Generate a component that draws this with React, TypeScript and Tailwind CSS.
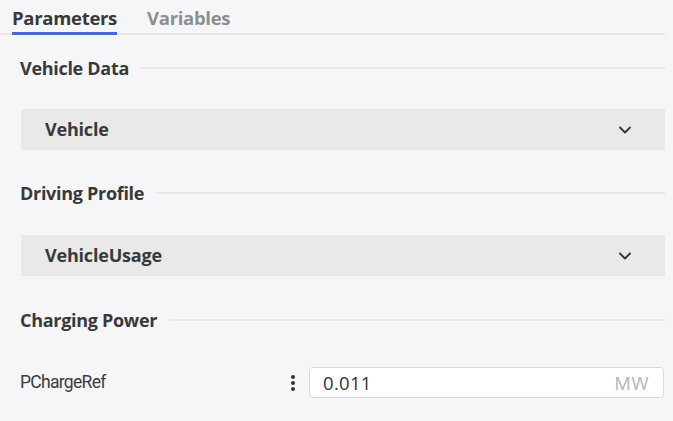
import { ChevronDown } from 'lucide-react';

const font = { fontFamily: '"Open Sans", "Noto Sans", sans-serif' };

const SectionTitle: React.FC<{ title: string }> = ({ title }) => (
	<div className="flex items-center gap-3 h-[40px]">
		<h4 className="font-bold text-[18px] text-[#38393b] tracking-[-0.3px] whitespace-nowrap">{title}</h4>
		<div className="flex-1 h-[2px] bg-[#e8e8ea]" />
	</div>
);

const Select: React.FC<{ value: string }> = ({ value }) => (
	<div className="flex items-center justify-between h-[41px] bg-[#e9e9ea] pl-[24px] pr-[30px] mr-[8px]">
		<span className="font-bold text-[18px] text-[#38393b] tracking-[-0.2px]">{value}</span>
		<ChevronDown className="w-[20px] h-[20px] text-[#333] mt-[1px]" strokeWidth={2.2} />
	</div>
);

export default function App() {
	return (
		<div className="w-[673px] h-[421px] bg-[#f6f6f8] overflow-hidden" style={font}>
			<div className="flex items-end gap-[30px] pl-[12px] mr-[8px] border-b-2 border-[#e8e8ea] h-[35px]">
				<div className="relative h-[33px] flex items-center pt-[2px]">
					<span className="font-bold text-[18.5px] text-[#38393b] tracking-[-0.3px]">Parameters</span>
					<div className="absolute left-0 right-0 -bottom-[2px] h-[3px] bg-[#4a67d6]" />
				</div>
				<div className="h-[33px] flex items-center pt-[2px]">
					<span className="font-bold text-[18.5px] text-[#8d8e91] tracking-[-0.3px]">Variables</span>
				</div>
			</div>

			<div className="pl-[20px]">
				<div className="mt-[13px] mr-[8px]">
					<SectionTitle title="Vehicle Data" />
				</div>
				<div className="mt-[21px] -ml-[20px] pl-[21px]">
					<Select value="Vehicle" />
				</div>
				<div className="mt-[23px] mr-[8px]">
					<SectionTitle title="Driving Profile" />
				</div>
				<div className="mt-[22px] -ml-[20px] pl-[21px]">
					<Select value="VehicleUsage" />
				</div>
				<div className="mt-[24px] mr-[8px]">
					<SectionTitle title="Charging Power" />
				</div>
				<div className="mt-[27px] flex items-center h-[31px] mr-[9px]">
					<span
						className="text-[17.5px] text-[#3a3b3e] w-[268px] tracking-[-0.7px]"
						style={{ fontFamily: 'Roboto, "Open Sans", sans-serif' }}
					>
						PChargeRef
					</span>
					<div className="flex flex-col gap-[2px] items-center w-[10px] mr-[11px]">
						<span className="w-[4px] h-[4px] rounded-full bg-[#333]" />
						<span className="w-[4px] h-[4px] rounded-full bg-[#333]" />
						<span className="w-[4px] h-[4px] rounded-full bg-[#333]" />
					</div>
					<div className="flex-1 flex items-center justify-between h-[31px] bg-white border border-[#d9d9dc] rounded-[4px] pl-[13px] pr-[14px]">
						<span className="text-[18.5px] text-[#333] tracking-[0.3px]">0.011</span>
						<span className="text-[18.5px] text-[#b5b5b8] tracking-[0.5px]">MW</span>
					</div>
				</div>
			</div>
		</div>
	);
}
